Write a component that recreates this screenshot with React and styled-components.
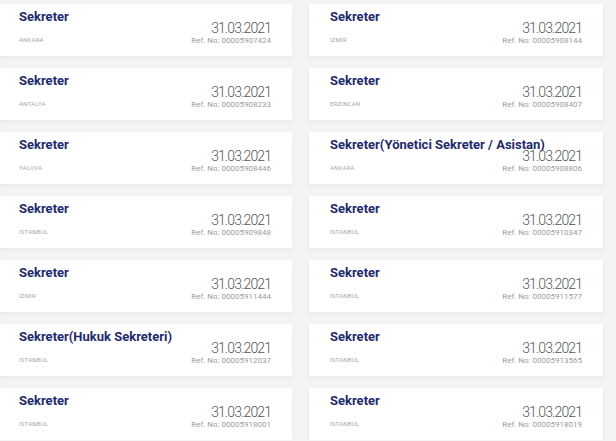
import styled, { createGlobalStyle } from "styled-components";

const GlobalStyle = createGlobalStyle`
  body {
    margin: 0;
    background: #f4f4f4;
    font-family: "Roboto", "Inter", sans-serif;
  }
`;

const Grid = styled.div`
  display: grid;
  grid-template-columns: 294px 294px;
  column-gap: 17px;
  row-gap: 12px;
  margin-left: -2px;
  padding-top: 4px;
`;

const Card = styled.div`
  background: #fff;
  height: 52px;
  box-sizing: border-box;
  padding: 5px 21px 0 21px;
  box-shadow: 0 2px 6px rgba(0, 0, 0, 0.05);
`;

const Title = styled.div`
  font-family: "Roboto", sans-serif;
  font-weight: 700;
  font-size: 13px;
  line-height: 14px;
  color: #1f2a6c;
  white-space: nowrap;
  padding-top: 1px;
`;

const Bottom = styled.div`
  display: flex;
  justify-content: space-between;
  align-items: flex-end;
  margin-top: -3px;
`;

const City = styled.div`
  font-size: 6px;
  color: #a8a8a8;
  text-transform: uppercase;
  letter-spacing: 0.2px;
  padding-bottom: 3px;
`;

const Meta = styled.div`
  display: flex;
  flex-direction: column;
  align-items: flex-end;
`;

const Date = styled.div`
  font-weight: 300;
  font-size: 14px;
  line-height: 14px;
  color: #555;
  letter-spacing: -0.9px;
`;

const Ref = styled.div`
  font-size: 8px;
  line-height: 11px;
  color: #9c9c9c;
`;

const jobs = [
  ["Sekreter", "Ankara", "00005907424"],
  ["Sekreter", "İzmir", "00005908144"],
  ["Sekreter", "Antalya", "00005908233"],
  ["Sekreter", "Erzincan", "00005908407"],
  ["Sekreter", "Yalova", "00005908446"],
  ["Sekreter(Yönetici Sekreter / Asistan)", "Ankara", "00005908806"],
  ["Sekreter", "İstanbul", "00005909848"],
  ["Sekreter", "İstanbul", "00005910347"],
  ["Sekreter", "İzmir", "00005911444"],
  ["Sekreter", "İstanbul", "00005911577"],
  ["Sekreter(Hukuk Sekreteri)", "İstanbul", "00005912037"],
  ["Sekreter", "İstanbul", "00005913565"],
  ["Sekreter", "İstanbul", "00005918001"],
  ["Sekreter", "İstanbul", "00005918019"],
];

export default function App() {
  return (
    <>
      <GlobalStyle />
      <Grid>
        {jobs.map(([title, city, ref]) => (
          <Card key={ref}>
            <Title>{title}</Title>
            <Bottom>
              <City lang="tr">{city}</City>
              <Meta>
                <Date>31.03.2021</Date>
                <Ref>Ref. No: {ref}</Ref>
              </Meta>
            </Bottom>
          </Card>
        ))}
      </Grid>
    </>
  );
}
